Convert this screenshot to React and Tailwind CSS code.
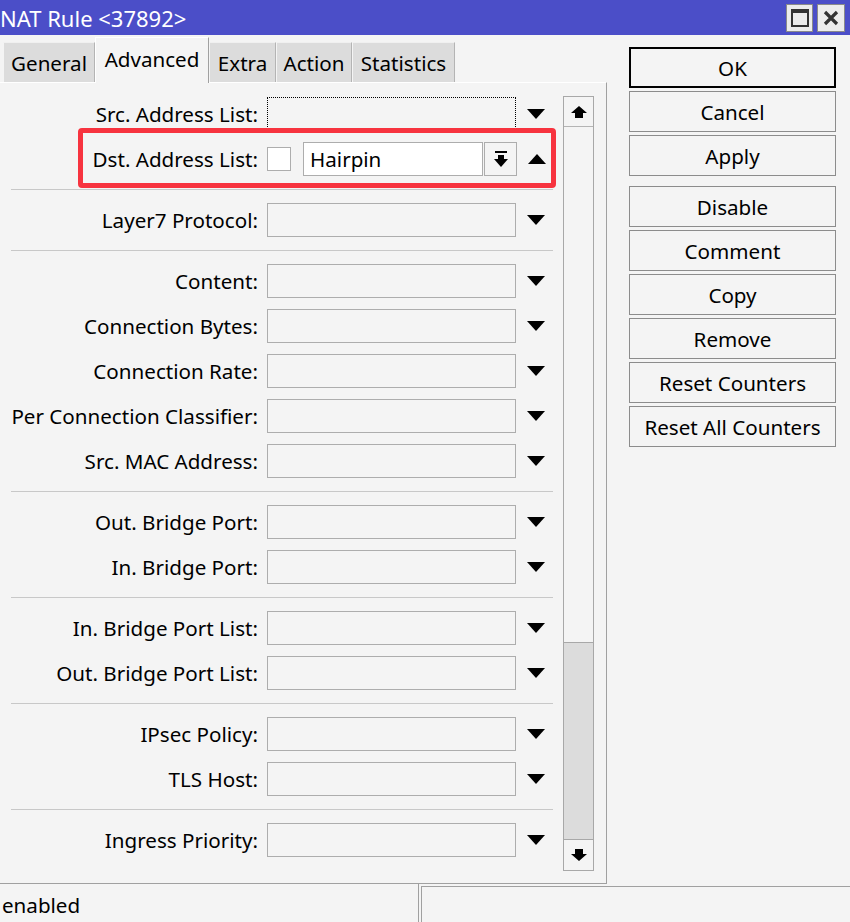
import React from "react";

const Tri = ({ up }) => (
  <svg width="18" height="10" viewBox="0 0 18 10">
    <polygon points={up ? "0,10 18,10 9,0" : "0,0 18,0 9,10"} fill="#000" />
  </svg>
);

const ArrowUp = () => (
  <svg width="16" height="12" viewBox="0 0 16 12">
    <polygon points="8,0 16,7 12,7 12,12 4,12 4,7 0,7" fill="#000" />
  </svg>
);

const ArrowDown = () => (
  <svg width="16" height="12" viewBox="0 0 16 12">
    <polygon points="4,0 12,0 12,5 16,5 8,12 0,5 4,5" fill="#000" />
  </svg>
);

const ArrowDownBar = () => (
  <svg width="14" height="16" viewBox="0 0 14 16">
    <rect x="1" y="0" width="12" height="2" fill="#000" />
    <polygon points="4,4 10,4 10,8 14,8 7,16 0,8 4,8" fill="#000" />
  </svg>
);

const Row = ({ label, focused }) => (
  <div className="flex h-[45px] items-center">
    <div className="w-[258px] pt-[2px] text-right">{label}</div>
    <div
      className={
        focused
          ? "ml-[9px] h-[34px] w-[249px] border border-dotted border-black"
          : "ml-[9px] h-[34px] w-[249px] border border-[#adadad]"
      }
    />
    <div className="ml-[11px] flex">
      <Tri />
    </div>
  </div>
);

const Sep = () => <div className="ml-[11px] mt-[8px] mb-[7px] h-px w-[542px] bg-[#c8c8c8]" />;

const groups = [
  ["Layer7 Protocol:"],
  ["Content:", "Connection Bytes:", "Connection Rate:", "Per Connection Classifier:", "Src. MAC Address:"],
  ["Out. Bridge Port:", "In. Bridge Port:"],
  ["In. Bridge Port List:", "Out. Bridge Port List:"],
  ["IPsec Policy:", "TLS Host:"],
  ["Ingress Priority:"],
];

const tabs = [
  { name: "General", w: "w-[92px]" },
  { name: "Advanced", w: "w-[114px]", active: true },
  { name: "Extra", w: "w-[67px]" },
  { name: "Action", w: "w-[76px]" },
  { name: "Statistics", w: "w-[103px]" },
];

const buttons = [
  ["OK", "Cancel", "Apply"],
  ["Disable", "Comment", "Copy", "Remove", "Reset Counters", "Reset All Counters"],
];

export default function App() {
  return (
    <div
      className="flex h-[922px] w-[850px] flex-col overflow-hidden bg-[#f4f4f4] text-[20.6px] text-black"
      style={{ fontFamily: '"Noto Sans", sans-serif' }}
    >
      {/* TITLE */}
      <div className="flex h-[35px] shrink-0 items-center bg-[#4b4ec8] pr-[5px]">
        <div className="flex-1 text-[22px] leading-none text-white">NAT Rule &lt;37892&gt;</div>
        <div className="flex h-[28px] w-[27px] items-center justify-center border border-[#8a8a8a] bg-[#ececec]">
          <div className="h-[18px] w-[18px] border-2 border-t-4 border-[#333]" />
        </div>
        <div className="ml-[4px] flex h-[28px] w-[28px] items-center justify-center border border-[#8a8a8a] bg-[#ececec]">
          <svg width="16" height="16" viewBox="0 0 16 16">
            <path d="M2 2 L14 14 M14 2 L2 14" stroke="#333" strokeWidth="3.2" />
          </svg>
        </div>
      </div>

      <div className="flex h-[849px] shrink-0">
        {/* LEFT */}
        <div className="flex w-[607px] flex-col">
          {/* TABS */}
          <div className="flex h-[47px] shrink-0 items-end pl-[3px]">
            {tabs.map((t) =>
              t.active ? (
                <div
                  key={t.name}
                  className={`${t.w} relative z-10 -mb-px flex h-[46px] items-start justify-center border-t border-l border-r border-t-white border-l-white border-r-[#a0a0a0] bg-[#f4f4f4] pt-[6px]`}
                >
                  {t.name}
                </div>
              ) : (
                <div
                  key={t.name}
                  className={`${t.w} flex h-[40px] items-center justify-center border-t border-l border-r border-t-[#f0f0f0] border-l-[#f4f4f4] border-r-[#b4b4b4] bg-[#dcdcdc] pt-[2px]`}
                >
                  {t.name}
                </div>
              ),
            )}
          </div>

          {/* PANEL */}
          <div className="relative flex flex-1 border-t border-b border-r border-t-white border-b-[#a0a0a0] border-r-[#a0a0a0]">
            <div className="w-[556px] pt-[8px]">
              <Row label="Src. Address List:" focused />
              <div className="flex h-[45px] items-center">
                <div className="w-[258px] pt-[2px] text-right">Dst. Address List:</div>
                <div className="ml-[9px] h-[24px] w-[24px] border border-[#adadad] bg-white" />
                <div className="ml-[12px] flex h-[34px] w-[180px] items-center border border-[#adadad] bg-white pl-[6px] pt-[2px]">
                  Hairpin
                </div>
                <div className="ml-[1px] flex h-[34px] w-[33px] items-center justify-center border border-[#adadad]">
                  <ArrowDownBar />
                </div>
                <div className="ml-[11px] flex">
                  <Tri up />
                </div>
              </div>
              {groups.map((g, i) => (
                <div key={i}>
                  <Sep />
                  {g.map((l) => (
                    <Row key={l} label={l} />
                  ))}
                </div>
              ))}
            </div>

            {/* SCROLLBAR */}
            <div className="mt-[13px] mb-[12px] ml-[7px] flex w-[31px] flex-col border border-[#a8a8a8]">
              <div className="flex h-[30px] items-center justify-center border-b border-[#b4b4b4] bg-[#f4f4f4]">
                <ArrowUp />
              </div>
              <div className="h-[516px] border-b border-[#a8a8a8] bg-[#f4f4f4]" />
              <div className="flex-1 bg-[#dcdcdc]" />
              <div className="flex h-[31px] items-center justify-center border-t border-[#a8a8a8] bg-[#f4f4f4]">
                <ArrowDown />
              </div>
            </div>

            {/* HIGHLIGHT */}
            <div className="absolute left-[78px] top-[45px] h-[60px] w-[478px] rounded-[4px] border-[5px] border-[#f7333f]" />
          </div>
        </div>

        {/* RIGHT BUTTONS */}
        <div className="ml-[22px] mt-[12px] flex w-[207px] flex-col">
          {buttons.map((grp, gi) => (
            <div key={gi} className={gi ? "mt-[10px] flex flex-col gap-[3px]" : "flex flex-col gap-[3px]"}>
              {grp.map((b) => (
                <div
                  key={b}
                  className={
                    b === "OK"
                      ? "flex h-[41px] items-center justify-center border-2 border-black pt-[2px]"
                      : "flex h-[41px] items-center justify-center border border-[#8c8c8c] pt-[2px]"
                  }
                >
                  {b}
                </div>
              ))}
            </div>
          ))}
        </div>
      </div>

      {/* STATUS */}
      <div className="flex flex-1">
        <div className="flex w-[419px] items-center border-r border-[#a0a0a0] pl-[2px] pt-[4px]">enabled</div>
        <div className="mt-[2px] ml-[2px] flex-1 border-t border-l border-[#a0a0a0]" />
      </div>
    </div>
  );
}
